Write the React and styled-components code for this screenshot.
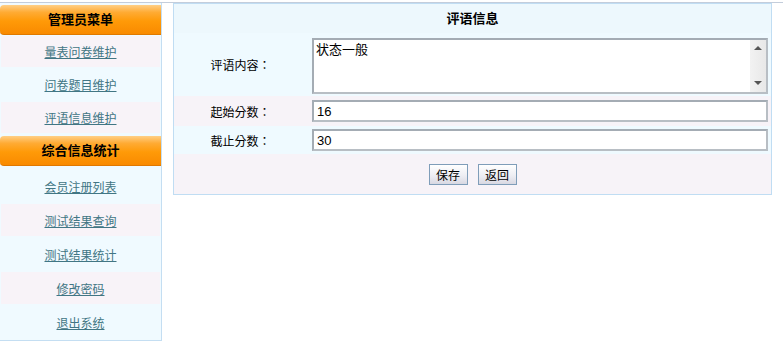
import React from 'react';
import styled, { createGlobalStyle } from 'styled-components';

const GlobalStyle = createGlobalStyle`
  body {
    margin: 0;
    background: #fff;
    font-family: "Liberation Sans", "Noto Sans CJK SC", sans-serif;
    font-size: 12px;
    color: #000;
  }
`;

const Page = styled.div`
  display: flex;
  align-items: flex-start;
  gap: 11px;
  margin-top: 2px;
  border-top: 1px solid #c3cddb;
`;

const Sidebar = styled.div`
  width: 161px;
  padding-top: 2px;
  background: #f0faff;
  border-right: 1px solid #c4def2;
  border-bottom: 1px solid #c4def2;
`;

const MenuHeader = styled.div`
  height: 29px;
  line-height: 29px;
  text-align: center;
  font-size: 13px;
  font-weight: bold;
  color: #000;
  border-radius: 4px 0 0 4px;
  background: linear-gradient(#ffcf86 0%, #ffab34 25%, #ff9a08 55%, #f98a00 100%);
  border-bottom: 1px solid #e07800;
`;

const MenuList = styled.div`
  display: flex;
  flex-direction: column;
  gap: 2px;
  padding: ${p => p.$top}px 1px ${p => p.$bottom}px;
`;

const MenuItem = styled.a`
  display: flex;
  align-items: center;
  justify-content: center;
  height: ${p => p.$h}px;
  font-size: 12px;
  color: #417684;
  text-decoration: underline;
  background: ${p => (p.$alt ? '#f8f3f8' : 'transparent')};
  cursor: pointer;
`;

const Panel = styled.div`
  width: 597px;
  border: 1px solid #c0ddf3;
  background: #fff;
`;

const TitleRow = styled.div`
  height: 29px;
  line-height: 29px;
  text-align: center;
  font-size: 13px;
  font-weight: bold;
  background: #edf8fd;
`;

const Row = styled.div`
  display: grid;
  grid-template-columns: 133px 1fr;
  align-items: center;
  height: ${p => p.$h}px;
  background: ${p => (p.$alt ? '#f7f3f8' : '#effaff')};
`;

const Label = styled.div`
  text-align: center;
  font-family: "Noto Sans CJK TC", "Noto Sans CJK SC", sans-serif;
  font-size: 12px;
`;

const Cell = styled.div`
  padding: 0 3px 0 5px;
`;

const AreaBox = styled.div`
  display: flex;
  height: 52px;
  margin-top: 2px;
  border: 2px solid #a4acb4;
  border-right-color: #b8bec4;
  border-bottom-color: #b8bec4;
  background: #fff;
`;

const Area = styled.textarea`
  flex: 1;
  border: 0;
  outline: none;
  resize: none;
  padding: 1px 2px;
  font-family: "Noto Sans CJK SC", sans-serif;
  font-size: 13px;
  line-height: 16px;
  background: transparent;
`;

const ScrollTrack = styled.div`
  width: 16px;
  display: flex;
  flex-direction: column;
  justify-content: space-between;
  align-items: center;
  padding: 6px 0 7px;
  background: linear-gradient(90deg, #f2f2f2, #e8e8e8);
`;

const Arrow = styled.span`
  width: 0;
  height: 0;
  border-left: 4px solid transparent;
  border-right: 4px solid transparent;
  ${p => (p.$down ? 'border-top: 4px solid #555;' : 'border-bottom: 4px solid #555;')}
`;

const TextInput = styled.input`
  box-sizing: border-box;
  display: block;
  width: 100%;
  height: 22px;
  padding: 0 3px;
  border: 2px solid #a4acb4;
  border-right-color: #b8bec4;
  border-bottom-color: #b8bec4;
  outline: none;
  font-family: "Liberation Sans", sans-serif;
  font-size: 13px;
  color: #000;
  background: #fff;
`;

const ButtonRow = styled.div`
  display: flex;
  justify-content: center;
  align-items: center;
  gap: 10px;
  height: 40px;
  background: #f7f3f8;
`;

const Button = styled.button`
  width: 39px;
  height: 21px;
  padding: 0;
  font-family: "Noto Sans CJK SC", sans-serif;
  font-size: 12px;
  color: #000;
  border: 1px solid #7f9db9;
  background: linear-gradient(#ffffff, #ececf2 60%, #d8d8e2);
  cursor: pointer;
`;

const group1 = ['量表问卷维护', '问卷题目维护', '评语信息维护'];
const group2 = ['会员注册列表', '测试结果查询', '测试结果统计', '修改密码', '退出系统'];

export default function App() {
  return (
    <>
      <GlobalStyle />
      <Page>
        <Sidebar>
          <MenuHeader>管理员菜单</MenuHeader>
          <MenuList $top={1} $bottom={3}>
            {group1.map((t, i) => (
              <MenuItem key={t} $h={31} $alt={i % 2 === 0}>{t}</MenuItem>
            ))}
          </MenuList>
          <MenuHeader>综合信息统计</MenuHeader>
          <MenuList $top={4} $bottom={2}>
            {group2.map((t, i) => (
              <MenuItem key={t} $h={32} $alt={i % 2 === 1}>{t}</MenuItem>
            ))}
          </MenuList>
        </Sidebar>

        <Panel>
          <TitleRow>评语信息</TitleRow>
          <Row $h={63}>
            <Label>评语内容：</Label>
            <Cell>
              <AreaBox>
                <Area defaultValue="状态一般" />
                <ScrollTrack>
                  <Arrow />
                  <Arrow $down />
                </ScrollTrack>
              </AreaBox>
            </Cell>
          </Row>
          <Row $h={30} $alt>
            <Label>起始分数：</Label>
            <Cell>
              <TextInput defaultValue="16" />
            </Cell>
          </Row>
          <Row $h={28}>
            <Label>截止分数：</Label>
            <Cell>
              <TextInput defaultValue="30" />
            </Cell>
          </Row>
          <ButtonRow>
            <Button>保存</Button>
            <Button>返回</Button>
          </ButtonRow>
        </Panel>
      </Page>
    </>
  );
}
